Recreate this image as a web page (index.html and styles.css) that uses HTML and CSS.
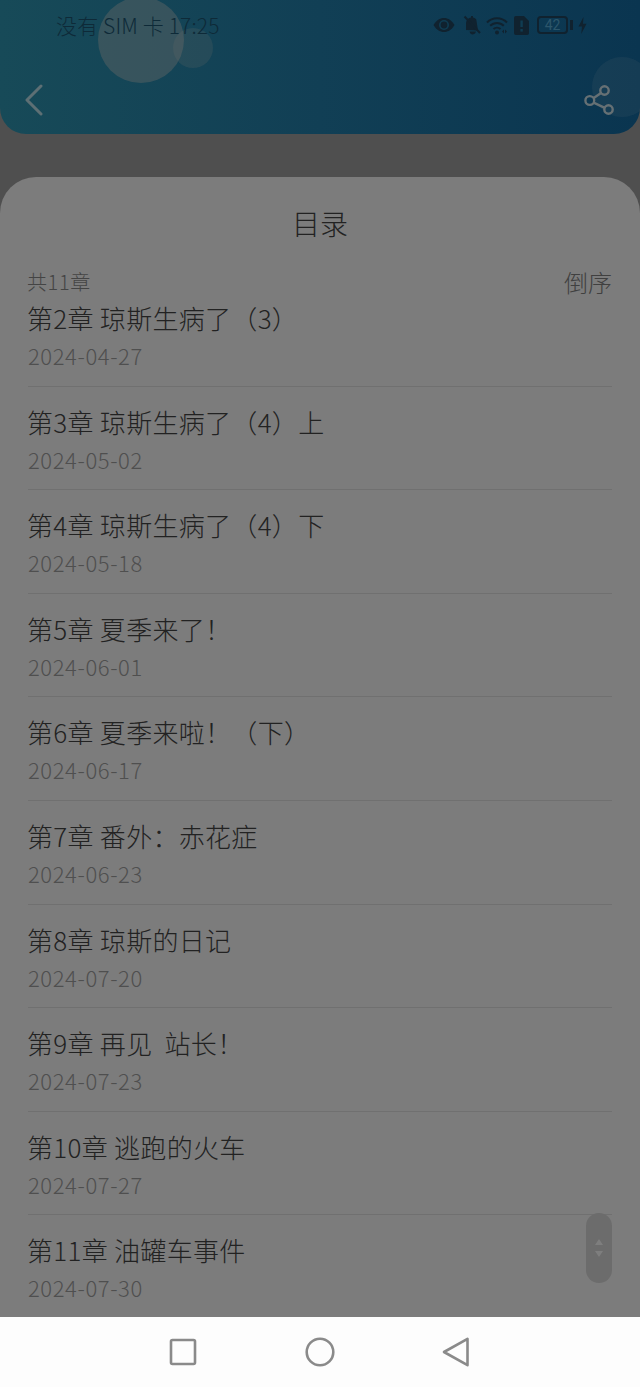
FILE: index.html
```html
<!DOCTYPE html>
<html lang="zh-CN">
<head>
  <meta charset="UTF-8">
  <meta name="viewport" content="width=device-width, initial-scale=1.0">
  <title>目录</title>
  <link rel="stylesheet" href="styles.css">
</head>
<body>

<div class="screen">
  <header class="top-bar">
    <span class="bubble bubble-big"></span>
    <span class="bubble bubble-small"></span>
    <span class="bubble bubble-right"></span>

    <div class="status-bar">
      <span class="status-text">没有 SIM 卡 17:25</span>
      <div class="status-icons">
        <svg width="22" height="16" viewBox="0 0 22 16">
          <path d="M0.5 8 C4 2 8 1 11 1 C14 1 18 2 21.5 8 C18 14 14 15 11 15 C8 15 4 14 0.5 8 Z" fill="#10222f"/>
          <circle cx="11" cy="8" r="5" fill="#0f3c52"/>
          <circle cx="11" cy="8" r="3.4" fill="#10222f"/>
        </svg>
        <svg class="bell-icon" width="18" height="20" viewBox="0 0 18 20">
          <path d="M3 15 L3 9 C3 5 5 3 8 2.4 L8 1 L10 1 L10 2.4 C11.5 2.7 12.5 3.4 13.3 4.4 L15 15.5 Z M6.5 16.5 L13 16.5 C12.6 18.6 11 19.4 9.5 19.4 C8 19.4 7 18.6 6.5 16.5 Z" fill="#10222f"/>
          <path d="M1.5 1.5 L17 18" stroke="#10222f" stroke-width="2"/>
        </svg>
        <svg width="22" height="19" viewBox="0 0 22 19">
          <path d="M1 6.5 C6.5 0.8 15.5 0.8 21 6.5 M4.2 9.8 C8 6 14 6 17.8 9.8 M7.5 13 C9.5 11.2 12.5 11.2 14.5 13" fill="none" stroke="#10222f" stroke-width="2"/>
          <circle cx="11" cy="16.5" r="2" fill="#10222f"/>
          <path d="M16 15.5 L18 13.5 L18 17.5 Z M19 13.5 L21 15.5 L19 17.5 Z" fill="#10222f"/>
        </svg>
        <svg class="sim-icon" width="15" height="19" viewBox="0 0 15 19">
          <path d="M2 0 L10 0 L15 5 L15 17 Q15 19 13 19 L2 19 Q0 19 0 17 L0 2 Q0 0 2 0 Z" fill="#10222f"/>
          <rect x="6.4" y="4.5" width="2.4" height="6.5" fill="#0f3c52"/>
          <rect x="6.4" y="13" width="2.4" height="2.6" fill="#0f3c52"/>
        </svg>
        <div class="battery"><span class="battery-level">42</span></div>
        <span class="battery-nub"></span>
        <svg width="9" height="17" viewBox="0 0 9 17">
          <path d="M5.5 0 L0.5 9.5 L4 9.5 L3.2 17 L8.5 6.8 L5 6.8 Z" fill="#10222f"/>
        </svg>
      </div>
    </div>

    <div class="nav-bar">
      <svg width="18" height="32" viewBox="0 0 18 32">
        <path d="M16 2 L2 16 L16 30" fill="none" stroke="#5d6f74" stroke-width="3" stroke-linecap="round" stroke-linejoin="round"/>
      </svg>
      <svg width="30" height="30" viewBox="0 0 30 30">
        <g fill="none" stroke="#667074" stroke-width="2.4">
          <circle cx="20.5" cy="5.5" r="4.2"/>
          <circle cx="5.8" cy="15.5" r="4.4"/>
          <circle cx="24.5" cy="24.5" r="4.2"/>
          <path d="M17 8 L9.4 13.2 M9.6 17.6 L20.8 22.8"/>
        </g>
      </svg>
    </div>
  </header>

  <section class="sheet">
    <h1 class="sheet-title">目录</h1>
    <div class="sheet-meta">
      <span class="chapter-count">共11章</span>
      <span class="sort-toggle">倒序</span>
    </div>

    <ul class="chapter-list">
      <li class="chapter"><p class="chapter-name">第2章 琼斯生病了（3）</p><p class="chapter-date">2024-04-27</p></li>
      <li class="chapter"><p class="chapter-name">第3章 琼斯生病了（4）上</p><p class="chapter-date">2024-05-02</p></li>
      <li class="chapter"><p class="chapter-name">第4章 琼斯生病了（4）下</p><p class="chapter-date">2024-05-18</p></li>
      <li class="chapter"><p class="chapter-name">第5章 夏季来了！</p><p class="chapter-date">2024-06-01</p></li>
      <li class="chapter"><p class="chapter-name">第6章 夏季来啦！（下）</p><p class="chapter-date">2024-06-17</p></li>
      <li class="chapter"><p class="chapter-name">第7章 番外：赤花症</p><p class="chapter-date">2024-06-23</p></li>
      <li class="chapter"><p class="chapter-name">第8章 琼斯的日记</p><p class="chapter-date">2024-07-20</p></li>
      <li class="chapter"><p class="chapter-name">第9章 再见&nbsp;&nbsp;站长！</p><p class="chapter-date">2024-07-23</p></li>
      <li class="chapter"><p class="chapter-name">第10章 逃跑的火车</p><p class="chapter-date">2024-07-27</p></li>
      <li class="chapter"><p class="chapter-name">第11章 油罐车事件</p><p class="chapter-date">2024-07-30</p></li>
    </ul>

    <div class="scroll-handle">
      <span class="arrow-up"></span>
      <span class="arrow-down"></span>
    </div>
  </section>

  <footer class="system-nav">
    <svg width="28" height="28" viewBox="0 0 28 28">
      <rect x="2" y="2" width="24" height="24" rx="1.5" fill="none" stroke="#8a8a8a" stroke-width="2.6"/>
    </svg>
    <svg width="30" height="30" viewBox="0 0 30 30">
      <circle cx="15" cy="15" r="13.3" fill="none" stroke="#8a8a8a" stroke-width="2.6"/>
    </svg>
    <svg width="28" height="30" viewBox="0 0 28 30">
      <path d="M2 15 L25.5 1.8 L25.5 28.2 Z" fill="none" stroke="#8a8a8a" stroke-width="2.6" stroke-linejoin="round"/>
    </svg>
  </footer>
</div>

</body>
</html>
```

FILE: styles.css
```css
* {
  box-sizing: border-box;
}

html, body {
  margin: 0;
  padding: 0;
}

body {
  font-family: "Noto Sans CJK SC", "Noto Sans", sans-serif;
  background-color: #4f4f4f;
}

.screen {
  width: 640px;
  height: 1387px;
  display: flex;
  flex-direction: column;
  overflow: hidden;
}

.top-bar {
  position: relative;
  height: 134px;
  flex-shrink: 0;
  background: linear-gradient(90deg, #174a58 0%, #113f55 50%, #0a3550 100%);
  border-radius: 0 0 26px 26px;
  overflow: hidden;
}

.bubble {
  position: absolute;
  border-radius: 50%;
}

.bubble-big {
  left: 98px;
  top: -3px;
  width: 86px;
  height: 86px;
  background-color: rgba(120, 110, 105, 0.36);
}

.bubble-small {
  left: 173px;
  top: 28px;
  width: 40px;
  height: 40px;
  background-color: rgba(110, 110, 105, 0.2);
}

.bubble-right {
  left: 592px;
  top: 57px;
  width: 60px;
  height: 60px;
  background-color: rgba(130, 130, 130, 0.1);
}

.status-bar {
  position: relative;
  height: 50px;
  padding: 0 53px 0 56px;
  display: flex;
  justify-content: space-between;
  align-items: center;
}

.status-text {
  font-size: 21px;
  color: #0e2a38;
  font-weight: 300;
  letter-spacing: 0.15px;
}

.status-icons {
  display: flex;
  align-items: center;
  gap: 5px;
}

.bell-icon {
  margin-left: 3px;
}

.sim-icon {
  margin-left: 1px;
}

.battery {
  width: 31px;
  height: 18px;
  margin-left: 3px;
  border: 2px solid #10222f;
  border-radius: 4px;
  display: flex;
  align-items: center;
  justify-content: center;
}

.battery-level {
  font-family: "Roboto", sans-serif;
  font-size: 14px;
  color: #2c566b;
  line-height: 1;
}

.battery-nub {
  width: 3px;
  height: 10px;
  margin-left: -3px;
  background-color: #10222f;
}

.nav-bar {
  position: relative;
  padding: 0 26px 0 25px;
  display: flex;
  justify-content: space-between;
  align-items: center;
  height: 60px;
  margin-top: 20px;
}

.sheet {
  position: relative;
  flex: 1;
  min-height: 0;
  margin-top: 43px;
  background-color: #7c7c7c;
  border-radius: 36px 36px 0 0;
  display: flex;
  flex-direction: column;
}

.sheet-title {
  margin: 0;
  padding-top: 27px;
  font-size: 28px;
  line-height: 38px;
  font-weight: 300;
  text-align: center;
  color: #222;
}

.sheet-meta {
  margin-top: 23px;
  padding: 0 28px 0 27px;
  height: 33px;
  display: flex;
  justify-content: space-between;
  align-items: center;
}

.chapter-count {
  font-size: 20px;
  font-weight: 300;
  letter-spacing: 0.6px;
  color: #444;
}

.sort-toggle {
  font-size: 24px;
  font-weight: 300;
  color: #404040;
}

.chapter-list {
  flex: 1;
  min-height: 0;
  margin: 0;
  padding: 0 28px;
  list-style: none;
  overflow: hidden;
}

.chapter {
  height: 103.6px;
  padding-top: 20px;
  border-bottom: 1px solid #707070;
}

/* list is scrolled a bit, same as in the app */
.chapter:first-child {
  margin-top: -15px;
}

.chapter:last-child {
  border-bottom: none;
}

.chapter-name {
  margin: 0 0 0 -1px;
  font-size: 26px;
  line-height: 30px;
  letter-spacing: 0.3px;
  color: #222;
  font-weight: 300;
}

.chapter-date {
  margin: 8px 0 0;
  font-size: 22px;
  line-height: 28px;
  color: #4f4f4f;
  letter-spacing: 0.6px;
  font-weight: 300;
}

.scroll-handle {
  position: absolute;
  right: 28px;
  bottom: 34px;
  width: 26px;
  height: 70px;
  border-radius: 13px;
  background-color: #6c6c6c;
  display: flex;
  flex-direction: column;
  align-items: center;
  justify-content: center;
  gap: 6px;
}

.arrow-up, .arrow-down {
  width: 0;
  height: 0;
  border-left: 4px solid transparent;
  border-right: 4px solid transparent;
}

.arrow-up {
  border-bottom: 6px solid #7e7e7e;
}

.arrow-down {
  border-top: 6px solid #7e7e7e;
}

.system-nav {
  height: 70px;
  flex-shrink: 0;
  background-color: #fdfdfd;
  display: flex;
  align-items: center;
  justify-content: center;
  gap: 107.5px;
  padding-right: 1px;
}
```
